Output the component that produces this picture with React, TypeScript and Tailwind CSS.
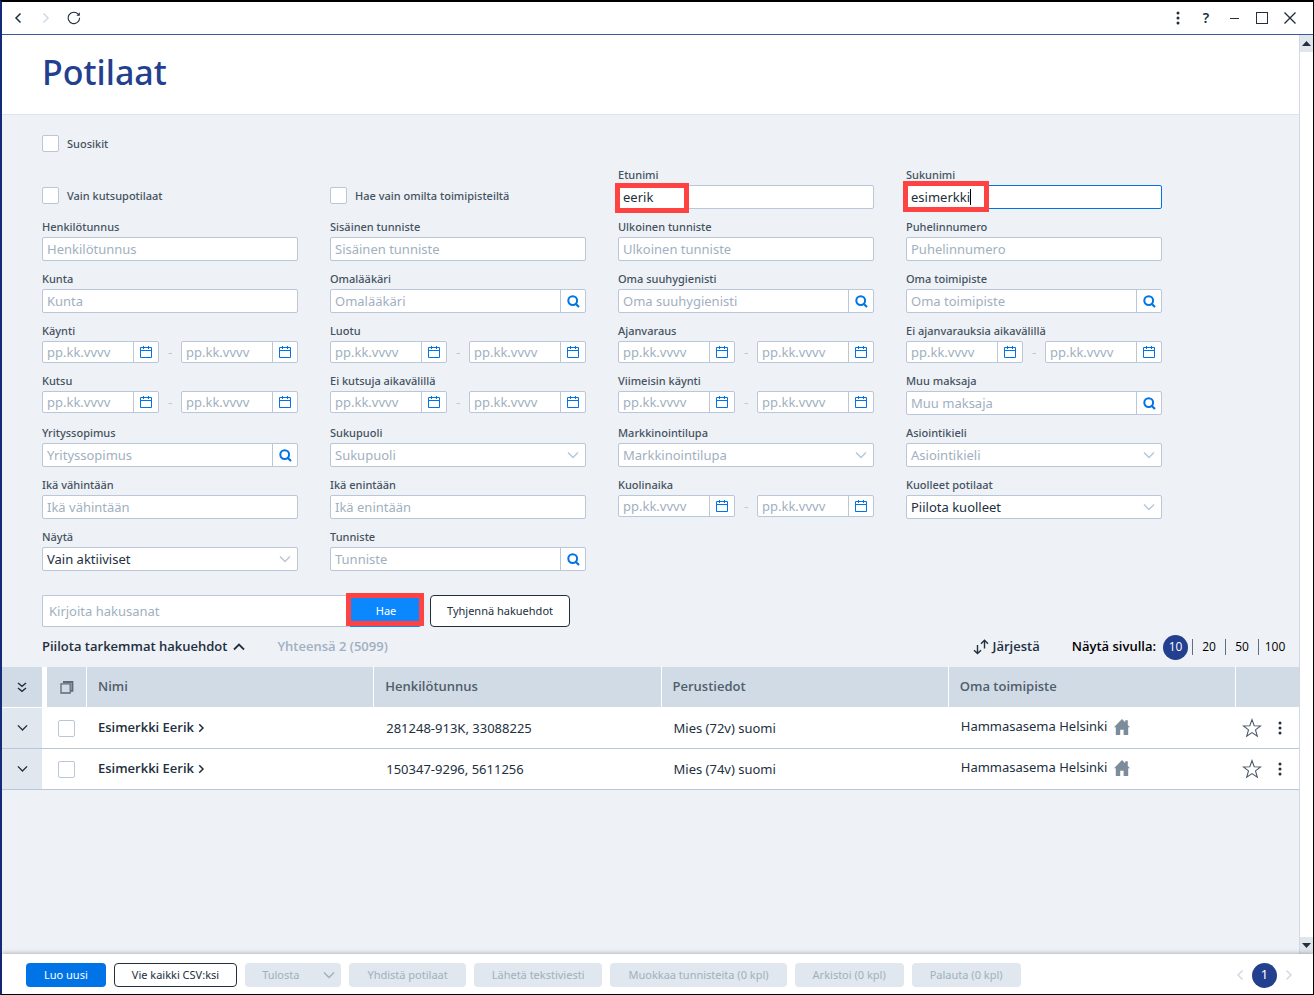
import React from 'react';

type FieldKind = 'text' | 'search' | 'select' | 'dates' | 'check';

interface Field {
  id: string;
  label: string;
  kind: FieldKind;
  value?: string;
}

const fields: Field[] = [
  { id: 'kutsupotilaat', label: 'Vain kutsupotilaat', kind: 'check' },
  { id: 'omat-toimipisteet', label: 'Hae vain omilta toimipisteiltä', kind: 'check' },
  { id: 'etunimi', label: 'Etunimi', kind: 'text', value: 'eerik' },
  { id: 'sukunimi', label: 'Sukunimi', kind: 'text', value: 'esimerkki' },
  { id: 'henkilotunnus', label: 'Henkilötunnus', kind: 'text' },
  { id: 'sisainen', label: 'Sisäinen tunniste', kind: 'text' },
  { id: 'ulkoinen', label: 'Ulkoinen tunniste', kind: 'text' },
  { id: 'puhelin', label: 'Puhelinnumero', kind: 'text' },
  { id: 'kunta', label: 'Kunta', kind: 'text' },
  { id: 'omalaakari', label: 'Omalääkäri', kind: 'search' },
  { id: 'suuhygienisti', label: 'Oma suuhygienisti', kind: 'search' },
  { id: 'toimipiste', label: 'Oma toimipiste', kind: 'search' },
  { id: 'kaynti', label: 'Käynti', kind: 'dates' },
  { id: 'luotu', label: 'Luotu', kind: 'dates' },
  { id: 'ajanvaraus', label: 'Ajanvaraus', kind: 'dates' },
  { id: 'ei-ajanvarauksia', label: 'Ei ajanvarauksia aikavälillä', kind: 'dates' },
  { id: 'kutsu', label: 'Kutsu', kind: 'dates' },
  { id: 'ei-kutsuja', label: 'Ei kutsuja aikavälillä', kind: 'dates' },
  { id: 'viimeisin', label: 'Viimeisin käynti', kind: 'dates' },
  { id: 'maksaja', label: 'Muu maksaja', kind: 'search' },
  { id: 'yrityssopimus', label: 'Yrityssopimus', kind: 'search' },
  { id: 'sukupuoli', label: 'Sukupuoli', kind: 'select' },
  { id: 'markkinointilupa', label: 'Markkinointilupa', kind: 'select' },
  { id: 'asiointikieli', label: 'Asiointikieli', kind: 'select' },
  { id: 'ika-min', label: 'Ikä vähintään', kind: 'text' },
  { id: 'ika-max', label: 'Ikä enintään', kind: 'text' },
  { id: 'kuolinaika', label: 'Kuolinaika', kind: 'dates' },
  { id: 'kuolleet', label: 'Kuolleet potilaat', kind: 'select', value: 'Piilota kuolleet' },
  { id: 'nayta', label: 'Näytä', kind: 'select', value: 'Vain aktiiviset' },
  { id: 'tunniste', label: 'Tunniste', kind: 'search' },
];

const patients = [
  { id: '281248-913K, 33088225', name: 'Esimerkki Eerik', info: 'Mies (72v) suomi', office: 'Hammasasema Helsinki' },
  { id: '150347-9296, 5611256', name: 'Esimerkki Eerik', info: 'Mies (74v) suomi', office: 'Hammasasema Helsinki' },
];

const bulkActions = [
  'Yhdistä potilaat',
  'Lähetä tekstiviesti',
  'Muokkaa tunnisteita (0 kpl)',
  'Arkistoi (0 kpl)',
  'Palauta (0 kpl)',
];

const chevrons = {
  left: { w: 8, h: 12, d: 'M6.5 1.5 2 6l4.5 4.5' },
  right: { w: 8, h: 12, d: 'M1.5 1.5 6 6l-4.5 4.5' },
  down: { w: 12, h: 8, d: 'M1 1.5 6 6.5l5-5' },
  up: { w: 12, h: 8, d: 'M1 6.5 6 1.5l5 5' },
};

const Chevron = ({ dir, size = 12, stroke = 1.5 }: { dir: keyof typeof chevrons; size?: number; stroke?: number }) => {
  const c = chevrons[dir];
  return (
    <svg width={(c.w * size) / 12} height={(c.h * size) / 12} viewBox={`0 0 ${c.w} ${c.h}`} fill="none" stroke="currentColor" strokeWidth={stroke} className="shrink-0">
      <path d={c.d} />
    </svg>
  );
};

const Dots = () => (
  <svg width="4" height="14" viewBox="0 0 4 14" fill="currentColor">
    <circle cx="2" cy="2" r="1.5" />
    <circle cx="2" cy="7" r="1.5" />
    <circle cx="2" cy="12" r="1.5" />
  </svg>
);

const SearchIcon = () => (
  <svg width="13" height="13" viewBox="0 0 13 13" fill="none" stroke="#0073e6" strokeWidth="2">
    <circle cx="5.7" cy="5.6" r="4.4" />
    <path d="m8.6 8.8 3.4 3.2" strokeWidth="2.2" />
  </svg>
);

const CalendarIcon = () => (
  <svg width="12" height="12" viewBox="0 0 12 12" fill="none" stroke="#0073e6">
    <path d="M.5 1.5h11v10H.5zM.5 4.5h11M3.5 0v3M8.5 0v3" />
  </svg>
);

const HouseIcon = () => (
  <svg width="16" height="16" viewBox="0 0 16 16" fill="#7d8c9b">
    <path d="M8 0 0 8.3h1.8V16h4.4v-5.2h3.4V16h4.6V8.3H16l-2.2-2.4V1.2h-2.6v2.1z" />
  </svg>
);

const StarIcon = () => (
  <svg width="20" height="20" viewBox="0 0 20 20" fill="none" stroke="#4a5a6a" strokeWidth="1.1">
    <path d="m10 1.6 2.2 6.1 6.4.2-5.1 4 1.8 6.3L10 14.6l-5.3 3.6 1.8-6.3-5.1-4 6.4-.2z" />
  </svg>
);

const Checkbox = ({ id, label }: { id: string; label?: string }) => (
  <input
    id={id}
    type="checkbox"
    aria-label={label}
    className="block size-[17px] shrink-0 appearance-none rounded-[2px] border border-[#b9c7d8] bg-white"
  />
);

const boxClass = 'flex w-full min-w-0 rounded-[2px] border border-[#b9c7d8] bg-white';
const inputClass = 'min-w-0 flex-1 bg-transparent pt-0.5 pl-1 text-[13px] text-[#222f3e] outline-none placeholder:text-[#9fb0c0]';
const addonClass = 'flex w-[25px] shrink-0 items-center justify-center border-l border-[#b9c7d8]';

const DateBox = ({ id, label }: { id: string; label?: string }) => (
  <div className={`${boxClass} h-[22px]`}>
    <input id={id} type="text" placeholder="pp.kk.vvvv" aria-label={label} className={inputClass} />
    <button type="button" aria-label="Valitse päivä" className={addonClass}>
      <CalendarIcon />
    </button>
  </div>
);

const FilterField = ({ field }: { field: Field }) => {
  const { id, label, kind, value } = field;

  if (kind === 'check') {
    return (
      <div className="flex h-11 items-end gap-2 pb-[5px]">
        <Checkbox id={id} />
        <label htmlFor={id} className="text-[11px] leading-4 font-medium text-[#44525f]">{label}</label>
      </div>
    );
  }

  return (
    <div className="min-w-0">
      <label htmlFor={id} className="block h-5 text-[11px] leading-5 font-medium text-[#44525f]">{label}</label>

      {kind === 'text' && (
        <div className="relative">
          <div className={id === 'sukunimi' ? 'flex h-6 w-full rounded-[2px] border border-[#0073e6] bg-white' : `${boxClass} h-6`}>
            <input id={id} type="text" placeholder={label} defaultValue={value} className={inputClass} />
          </div>
          {id === 'etunimi' && (
            <span className="pointer-events-none absolute -top-0.5 -left-[3px] h-[30px] w-[74px] border-[5px] border-[#ff4343]" />
          )}
          {id === 'sukunimi' && (
            <>
              <span className="pointer-events-none absolute top-1 left-16 h-4 w-px bg-black" />
              <span className="pointer-events-none absolute -top-1 -left-[3px] h-[31px] w-[86px] border-[5px] border-[#ff4343]" />
            </>
          )}
        </div>
      )}

      {kind === 'search' && (
        <div className={`${boxClass} h-6`}>
          <input id={id} type="text" placeholder={label} className={inputClass} />
          <button type="button" aria-label={`Etsi: ${label}`} className={addonClass}>
            <SearchIcon />
          </button>
        </div>
      )}

      {kind === 'select' && (
        <div className={`${boxClass} relative h-6 items-center`}>
          <select
            id={id}
            className={`h-full w-full appearance-none bg-transparent pt-0.5 pl-1 text-[13px] outline-none ${value ? 'text-[#222f3e]' : 'text-[#9fb0c0]'}`}
          >
            <option>{value ?? label}</option>
          </select>
          <span className="pointer-events-none absolute right-1.5 text-[#b9c7d8]">
            <Chevron dir="down" />
          </span>
        </div>
      )}

      {kind === 'dates' && (
        <div className="flex items-center">
          <DateBox id={id} />
          <span className="w-[22px] shrink-0 text-center text-[13px] leading-4 text-[#b9c7d8]">-</span>
          <DateBox id={`${id}-loppu`} label={`${label}, loppu`} />
        </div>
      )}
    </div>
  );
};

const TitleBar = () => (
  <header className="flex h-[33px] shrink-0 items-center justify-between border-b border-[#3a5a9c] bg-white pr-[9px] pl-0.5 text-[#222f3e] *:flex">
    <div>
      <button type="button" aria-label="Takaisin" className="flex size-7 items-center justify-center">
        <Chevron dir="left" />
      </button>
      <button type="button" aria-label="Eteenpäin" className="flex size-7 items-center justify-center text-[#cfdae5]">
        <Chevron dir="right" />
      </button>
      <button type="button" aria-label="Päivitä" className="flex size-7 items-center justify-center">
        <svg width="14" height="14" viewBox="0 0 14 14" fill="none" stroke="currentColor" strokeWidth="1.1">
          <path d="M12.6 6.8A5.7 5.7 0 1 1 11.2 3.2" />
          <path d="M12.8 1.3v3.5H9.4z" fill="currentColor" stroke="none" />
        </svg>
      </button>
    </div>
    <div>
      <button type="button" aria-label="Valikko" className="flex size-7 items-center justify-center"><Dots /></button>
      <button type="button" aria-label="Ohje" className="flex size-7 items-center justify-center text-sm font-semibold">?</button>
      <button type="button" aria-label="Pienennä" className="flex size-7 items-center justify-center">
        <span className="h-px w-[9px] bg-current" />
      </button>
      <button type="button" aria-label="Suurenna" className="flex size-7 items-center justify-center">
        <span className="size-3 border border-current" />
      </button>
      <button type="button" aria-label="Sulje" className="flex size-7 items-center justify-center">
        <svg width="12" height="12" viewBox="0 0 12 12" fill="none" stroke="currentColor" strokeWidth="1.4">
          <path d="m.5.5 11 11M11.5.5l-11 11" />
        </svg>
      </button>
    </div>
  </header>
);

const ScrollTrack = () => (
  <div className="flex w-3.5 shrink-0 flex-col justify-between border-l border-[#cfd8e3] bg-white text-[#222f3e]">
    <button type="button" aria-label="Vieritä ylös" className="flex h-[17px] items-center justify-center bg-[#e0e6ec]">
      <svg width="9" height="5" viewBox="0 0 9 5" fill="currentColor"><path d="M4.5 0 9 5H0z" /></svg>
    </button>
    <button type="button" aria-label="Vieritä alas" className="flex h-[17px] items-center justify-center bg-[#e0e6ec]">
      <svg width="9" height="5" viewBox="0 0 9 5" fill="currentColor"><path d="M0 0h9L4.5 5z" /></svg>
    </button>
  </div>
);

const ResultsTable = () => (
  <table className="w-full table-fixed border-separate border-spacing-0 text-left text-[13px] text-[#222f3e]">
    <colgroup>
      <col className="w-10" />
      <col className="w-[45px]" />
      <col />
      <col />
      <col />
      <col />
      <col className="w-[63px]" />
    </colgroup>
    <thead className="font-['Open_Sans','Noto_Sans',sans-serif]">
      <tr className="h-[41px] bg-[#d1dbe5] text-[#4f5e6c]">
        <th className="border-b border-white p-0">
          <button type="button" aria-label="Avaa kaikki" className="flex w-full flex-col items-center text-[#222f3e]">
            <svg width="10" height="11" viewBox="0 0 10 11" fill="none" stroke="currentColor" strokeWidth="1.4">
              <path d="m1 1 4 3.4L9 1M1 6l4 3.4L9 6" />
            </svg>
          </button>
        </th>
        <th className="border-r border-b border-l-[5px] border-white p-0">
          <button type="button" aria-label="Valitse kaikki" className="flex w-full justify-center">
            <svg width="14" height="14" viewBox="0 0 14 14" fill="none" stroke="#5d6a77" strokeWidth="1.3">
              <path d="M1 3.8h9.2V13H1z" />
              <path d="M3 2h9.4v8.8h-1.6" strokeWidth="2" />
            </svg>
          </button>
        </th>
        {['Nimi', 'Henkilötunnus', 'Perustiedot', 'Oma toimipiste'].map((title) => (
          <th key={title} className="border-r border-b border-white py-0 pr-0 pl-[11px] font-semibold">{title}</th>
        ))}
        <th className="border-b border-white p-0" aria-label="Toiminnot" />
      </tr>
    </thead>
    <tbody>
      {patients.map((p) => (
        <tr key={p.id} className="h-[41px] bg-white *:border-b *:border-[#b9c7d8]">
          <td className="bg-[#e0e7ee] p-0">
            <button type="button" aria-label="Avaa rivi" className="flex w-full justify-center">
              <Chevron dir="down" size={11} />
            </button>
          </td>
          <td className="py-0 pr-0 pl-4">
            <Checkbox id={`valitse-${p.id}`} label={`Valitse ${p.name}`} />
          </td>
          <td className="py-0 pr-0 pl-[11px] font-['Open_Sans','Noto_Sans',sans-serif] font-semibold">
            <a href="#potilas" className="inline-flex items-center gap-1">
              {p.name}
              <Chevron dir="right" size={10} stroke={1.8} />
            </a>
          </td>
          <td className="pt-0.5 pr-0 pb-0 pl-3">{p.id}</td>
          <td className="pt-0.5 pr-0 pb-0 pl-3">{p.info}</td>
          <td className="pt-0 pr-0 pb-0.5 pl-3">
            <div className="flex items-center gap-[7px]">
              {p.office}
              <HouseIcon />
            </div>
          </td>
          <td className="p-0">
            <div className="flex items-center justify-end gap-4 pr-[17px]">
              <button type="button" aria-label="Suosikki"><StarIcon /></button>
              <button type="button" aria-label="Lisää toimintoja"><Dots /></button>
            </div>
          </td>
        </tr>
      ))}
    </tbody>
  </table>
);

const Footer = () => (
  <footer className="relative flex h-10 shrink-0 items-center justify-between bg-white pt-0.5 pr-5 pl-6 text-[11px] shadow-[0_-1px_4px_rgba(0,0,0,0.25)]">
    <div className="flex gap-2">
      <button type="button" className="h-6 rounded-[4px] bg-[#0073e6] px-[18px] text-white">Luo uusi</button>
      <button type="button" className="h-6 rounded-[4px] border border-[#222f3e] bg-white px-[17px] text-[#222f3e]">Vie kaikki CSV:ksi</button>
      <button type="button" disabled className="flex h-6 items-center gap-6 rounded-[4px] bg-[#e0e7ee] pr-1.5 pl-[17px] text-[#9fb0c0]">
        Tulosta
        <Chevron dir="down" />
      </button>
      {bulkActions.map((action) => (
        <button key={action} type="button" disabled className="h-6 rounded-[4px] bg-[#e0e7ee] px-[18px] text-[#9fb0c0]">{action}</button>
      ))}
    </div>
    <nav aria-label="Sivut" className="flex items-center gap-2 text-[#cfdae5]">
      <button type="button" aria-label="Edellinen sivu"><Chevron dir="left" size={12} /></button>
      <button type="button" className="size-[25px] rounded-full bg-[#23408e] text-[13px] text-white">1</button>
      <button type="button" aria-label="Seuraava sivu"><Chevron dir="right" size={12} /></button>
    </nav>
  </footer>
);

const App: React.FC = () => (
  <div className="flex h-screen flex-col border-t-2 border-r border-b border-l-2 border-t-black border-r-black border-b-black border-l-[#142c78] bg-white font-['Noto_Sans','Open_Sans',sans-serif]">
    <TitleBar />

    <div className="flex min-h-0 flex-1">
      <main className="min-w-0 flex-1 overflow-hidden bg-[#eef1f6]">
        <div className="flex h-20 items-center border-b border-[#dde6ef] bg-white px-10 pb-1">
          <h1 className="text-[34px] font-medium text-[#23408e]">Potilaat</h1>
        </div>

        {/* Search criteria */}
        <form className="pt-5 pl-10" onSubmit={(e) => e.preventDefault()}>
          <div className="mb-[13px] flex h-[17px] items-center gap-2">
            <Checkbox id="suosikit" />
            <label htmlFor="suosikit" className="text-[11px] leading-4 font-medium text-[#44525f]">Suosikit</label>
          </div>

          <div className="grid grid-cols-4 gap-x-8 gap-y-2 pr-[137px]">
            {fields.map((field) => (
              <FilterField key={field.id} field={field} />
            ))}
          </div>

          <div className="mt-6 flex gap-2">
            <div className="relative flex h-8 w-[380px]">
              <input
                type="text"
                aria-label="Hakusanat"
                placeholder="Kirjoita hakusanat"
                className="min-w-0 flex-1 rounded-l-[2px] border border-r-0 border-[#b9c7d8] bg-white pt-0.5 pl-1.5 text-[13px] outline-none placeholder:text-[#9fb0c0]"
              />
              <button type="submit" className="w-[72px] rounded-r-[4px] bg-[#0b87ff] text-[11px] text-white">Hae</button>
              <span className="pointer-events-none absolute -top-0.5 -right-0.5 h-[33px] w-[78px] border-[5px] border-[#ff4343]" />
            </div>
            <button type="reset" className="h-8 rounded-[4px] border border-[#222f3e] bg-white px-4 text-[11px] text-[#222f3e]">
              Tyhjennä hakuehdot
            </button>
          </div>
        </form>

        <div className="flex h-10 items-center justify-between pr-2 pl-10 font-['Open_Sans','Noto_Sans',sans-serif] text-[13px] font-semibold text-[#222f3e]">
          <div className="flex items-center gap-8">
            <button type="button" className="flex items-center gap-1.5">
              Piilota tarkemmat hakuehdot
              <Chevron dir="up" stroke={1.8} />
            </button>
            <span className="text-[#9fb0c0]">Yhteensä 2 (5099)</span>
          </div>
          <div className="flex items-center">
            <button type="button" className="mr-8 flex items-center gap-1">
              <svg width="16" height="16" viewBox="0 0 16 16" fill="none" stroke="currentColor" strokeWidth="1.4">
                <path d="M4.5 6V14.2M1 11.2l3.5 3.4L8 11.2M11.5 9.5V1.5M8 4.7l3.5-3.4L15 4.7" />
              </svg>
              Järjestä
            </button>
            <span className="mr-[7px] text-black">Näytä sivulla:</span>
            <button type="button" className="mr-1 size-[25px] rounded-full bg-[#23408e] text-xs font-medium text-white">10</button>
            {['20', '50', '100'].map((n) => (
              <button key={n} type="button" className="h-4 w-[33px] border-l border-[#5d6f80] text-xs leading-4 font-medium text-black">{n}</button>
            ))}
          </div>
        </div>

        <ResultsTable />
      </main>
      <ScrollTrack />
    </div>

    <Footer />
  </div>
);

export default App;
